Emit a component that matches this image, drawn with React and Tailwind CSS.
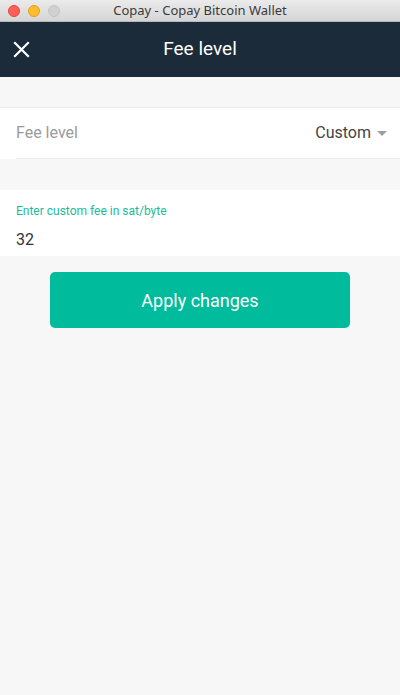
import React from 'react';

const font = { fontFamily: 'Roboto, "Noto Sans", sans-serif' };

function TitleBar() {
  return (
    <div className="relative flex h-[22px] items-center justify-center border-b border-[#b9b9b9] bg-gradient-to-b from-[#ebebeb] to-[#d5d5d5]">
      <div className="absolute left-[8px] top-[5px] flex gap-[8px]">
        <span className="h-[12px] w-[12px] rounded-full border border-[#e2463f] bg-[#fe5f57]" />
        <span className="h-[12px] w-[12px] rounded-full border border-[#e1a116] bg-[#febc2e]" />
        <span className="h-[12px] w-[12px] rounded-full border border-[#c4c4c4] bg-[#d0d0d0]" />
      </div>
      <span className="text-[13px] text-[#3a3a3a]" style={{ fontFamily: '"Noto Sans", "Liberation Sans", sans-serif' }}>
        Copay - Copay Bitcoin Wallet
      </span>
    </div>
  );
}

export default function App() {
  return (
    <div className="flex h-[695px] w-[400px] flex-col bg-[#f7f7f7]" style={font}>
      <TitleBar />
      <header className="relative flex h-[55px] items-center justify-center bg-[#1b2b3a]">
        <button className="absolute left-[13px] top-[19px] text-white">
          <svg width="17" height="17" viewBox="0 0 17 17" fill="none" stroke="white" strokeWidth="2.2" strokeLinecap="square">
            <path d="M2 2 L15 15 M15 2 L2 15" />
          </svg>
        </button>
        <h1 className="text-[19px] font-normal text-white">Fee level</h1>
      </header>

      <div className="mt-[30px] border-t border-[#ececec] bg-white">
        <div className="ml-[16px] flex h-[51px] items-center justify-between border-b border-[#ececec] pr-[13px]">
          <span className="text-[16px] text-[#9b9b9b]">Fee level</span>
          <span className="flex items-center gap-[6px] text-[16px] text-[#444]">
            Custom
            <svg width="10" height="5" viewBox="0 0 10 5">
              <path d="M0 0 L10 0 L5 5 Z" fill="#9e9e9e" />
            </svg>
          </span>
        </div>
      </div>

      <div className="mt-[31px] flex h-[66px] flex-col bg-white px-[16px] pt-[12px]">
        <span className="text-[12px] text-[#1abc9c]">Enter custom fee in sat/byte</span>
        <span className="mt-[8px] text-[16px] text-[#333]">32</span>
      </div>

      <div className="mt-[16px] flex justify-center">
        <button className="flex h-[56px] w-[300px] items-center justify-center rounded-[5px] bg-[#00bb9c] text-[18px] text-white">
          Apply changes
        </button>
      </div>
    </div>
  );
}
